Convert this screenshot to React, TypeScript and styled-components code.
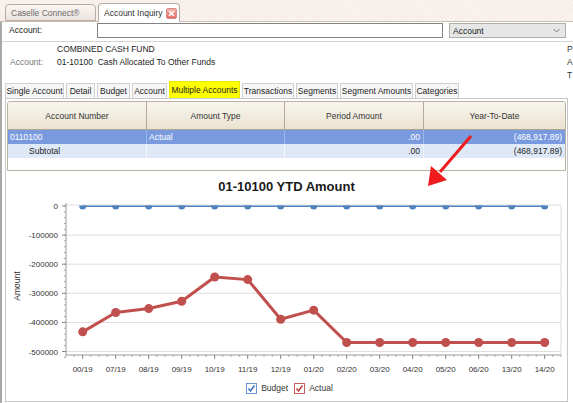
import React from "react";
import styled, { createGlobalStyle } from "styled-components";

const GlobalStyle = createGlobalStyle`
  html, body { margin: 0; padding: 0; background: #fff; }
  body {
    font-family: "Liberation Sans", Arial, sans-serif;
    font-size: 8.5px;
    color: #1e1e1e;
  }
  #root { width: 573px; height: 403px; overflow: hidden; }
`;

const Frame = styled.div`
  position: relative;
  width: 573px;
  height: 403px;
  overflow: hidden;
  display: flex;
  flex-direction: column;
  background: #fff;
`;

const DocStrip = styled.div`
  flex: none;
  height: 22px;
  box-sizing: border-box;
  display: flex;
  align-items: flex-end;
  gap: 2px;
  padding-left: 5px;
  background-color: #f8eee9;
  background-image: repeating-linear-gradient(
    45deg,
    rgba(255, 255, 255, 0.4) 0 1px,
    transparent 1px 3px
  );
  border-bottom: 1px solid #cbbcb4;
`;

const DocTab = styled.div<{ $active?: boolean; $w: number }>`
  width: ${(p) => p.$w}px;
  height: ${(p) => (p.$active ? 19 : 17)}px;
  margin-bottom: ${(p) => (p.$active ? -1 : 0)}px;
  box-sizing: border-box;
  border: 1px solid #b8aba4;
  border-bottom: ${(p) => (p.$active ? "none" : "1px solid #b8aba4")};
  border-radius: 4px 4px 0 0;
  background: ${(p) => (p.$active ? "#fff" : "linear-gradient(#fbf6f3, #ece3de)")};
  color: ${(p) => (p.$active ? "#333" : "#6b6b6b")};
  display: flex;
  align-items: center;
  justify-content: space-between;
  padding: 0 2px 0 5px;
  font-size: 8.5px;
  white-space: nowrap;
`;

const CloseBox = styled.span`
  width: 11px;
  height: 11px;
  box-sizing: border-box;
  border: 1px solid #d58c86;
  border-radius: 2px;
  background: linear-gradient(#f6b0a9, #e2675e);
  display: flex;
  align-items: center;
  justify-content: center;
`;

const Body = styled.div`
  flex: 1;
  display: flex;
  flex-direction: column;
  border-left: 2px solid #a8a8a8;
  min-height: 0;
`;

const AccountRow = styled.div`
  flex: none;
  height: 20px;
  box-sizing: border-box;
  display: flex;
  align-items: flex-start;
  padding: 1px 0 0 7px;
  border-bottom: 1px solid #d4d4d4;
`;

const FieldLabel = styled.span`
  width: 88px;
  line-height: 15px;
  color: #1e1e1e;
`;

const TextInput = styled.div`
  width: 346px;
  height: 15px;
  box-sizing: border-box;
  border: 1px solid #828282;
  background: #fff;
`;

const SelectBox = styled.div`
  width: 117px;
  height: 15px;
  margin-left: 6px;
  box-sizing: border-box;
  border: 1px solid #adadad;
  background: #e6e6e6;
  display: flex;
  align-items: center;
  justify-content: space-between;
  padding: 0 5px 0 3px;
  color: #222;
`;

const InfoArea = styled.div`
  flex: none;
  height: 41px;
  display: grid;
  grid-template-columns: 47px 1fr 6px;
  grid-auto-rows: 13px;
  padding-left: 8px;
  align-items: center;
  overflow: hidden;
`;

const InfoLabel = styled.span`
  color: #7a7a7a;
`;

const InfoValue = styled.span`
  white-space: pre;
  color: #1e1e1e;
`;

const EdgeLetter = styled.span`
  color: #333;
  overflow: hidden;
`;

const TabsRow = styled.div`
  flex: none;
  height: 15px;
  display: flex;
  align-items: flex-end;
  gap: 2px;
  padding-left: 3px;
`;

const PageTab = styled.div<{ $active?: boolean; $w: number }>`
  width: ${(p) => p.$w}px;
  height: ${(p) => (p.$active ? 17 : 15)}px;
  box-sizing: border-box;
  border: 1px solid ${(p) => (p.$active ? "#e8e800" : "#d0d0d0")};
  border-bottom: none;
  background: ${(p) => (p.$active ? "#ffff00" : "#f6f6f6")};
  color: #1e1e1e;
  display: flex;
  align-items: center;
  justify-content: center;
  white-space: nowrap;
  position: relative;
  z-index: 1;
`;

const Panel = styled.div`
  flex: 1;
  margin: 0 5px 1px 3px;
  border: 1px solid #c8c8c8;
  display: flex;
  flex-direction: column;
  min-height: 0;
`;

const DataGrid = styled.div`
  flex: none;
  height: 70px;
  margin: 2px 1px 0 1px;
  box-sizing: border-box;
  border: 1px solid #b9b1a1;
  border-radius: 3px 3px 0 0;
  display: flex;
  flex-direction: column;
  overflow: hidden;
`;

const Cols = "139px 138px 139px 1fr";

const HeaderRow = styled.div`
  height: 28px;
  box-sizing: border-box;
  display: grid;
  grid-template-columns: ${Cols};
  background: linear-gradient(#f8f5ee, #ebe3d1);
  border-bottom: 1px solid #b0a793;
`;

const HeaderCell = styled.div`
  display: flex;
  align-items: center;
  justify-content: center;
  border-right: 1px solid #b3aa97;
  color: #333;
  &:last-child { border-right: none; }
`;

const DataRow = styled.div<{ $selected?: boolean }>`
  height: 14px;
  display: grid;
  grid-template-columns: ${Cols};
  background: ${(p) => (p.$selected ? "#7a9adf" : "#dee8f7")};
  color: ${(p) => (p.$selected ? "#fff" : "#1e1e1e")};
`;

const DataCell = styled.div<{ $align?: "left" | "right"; $indent?: number; $line: string }>`
  display: flex;
  align-items: center;
  justify-content: ${(p) => (p.$align === "right" ? "flex-end" : "flex-start")};
  padding: 0 3px 0 ${(p) => 2 + (p.$indent || 0)}px;
  border-right: 1px solid ${(p) => p.$line};
  white-space: nowrap;
  &:last-child { border-right: none; }
`;

const ChartSection = styled.div`
  flex: 1;
  display: flex;
  flex-direction: column;
  align-items: center;
`;

const ChartTitle = styled.div`
  margin-top: 8px;
  height: 16px;
  line-height: 16px;
  font-size: 13px;
  font-weight: bold;
  color: #1a1a1a;
`;

const ChartSvg = styled.svg`
  display: block;
  width: 560px;
  height: 183px;
`;

const Legend = styled.div`
  height: 18px;
  margin-top: 1px;
  display: flex;
  align-items: center;
  gap: 6px;
  margin-left: 6px;
`;

const LegendItem = styled.div`
  display: flex;
  align-items: center;
  gap: 4px;
  color: #333;
  font-size: 8.5px;
`;

const CheckBox = styled.span<{ $color: string }>`
  width: 11px;
  height: 11px;
  box-sizing: border-box;
  border: 1px solid ${(p) => p.$color};
  background: #fff;
  display: flex;
  align-items: center;
  justify-content: center;
`;

const ArrowOverlay = styled.svg`
  position: absolute;
  left: 0;
  top: 0;
  width: 573px;
  height: 403px;
  pointer-events: none;
  z-index: 5;
`;

const pageTabs = [
  { label: "Single Account", w: 59 },
  { label: "Detail", w: 29 },
  { label: "Budget", w: 33 },
  { label: "Account", w: 35 },
  { label: "Multiple Accounts", w: 71, active: true },
  { label: "Transactions", w: 52 },
  { label: "Segments", w: 42 },
  { label: "Segment Amounts", w: 73 },
  { label: "Categories", w: 44 },
];

const periods = [
  "00/19", "07/19", "08/19", "09/19", "10/19", "11/19", "12/19", "01/20",
  "02/20", "03/20", "04/20", "05/20", "06/20", "13/20", "14/20",
];

const actual = [
  -432500, -366000, -352500, -327500, -244000, -253000, -389000, -358000,
  -468918, -468918, -468918, -468918, -468918, -468918, -468918,
];

// chart geometry (local svg coords)
const AX = 59; // y axis x
const PR = 554; // plot right
const PT = 10; // plot top
const Y0 = 11; // value 0
const SCALE = 29.1 / 100000;
const XB = 160; // x axis line
const X0 = 75.7;
const STEP = 33;

const xAt = (i: number) => X0 + STEP * i;
const yAt = (v: number) => Y0 - v * SCALE;

function Chart() {
  const yTicks = [0, -100000, -200000, -300000, -400000, -500000];
  const minorY: number[] = [];
  for (let v = 0; v >= -520000; v -= 20000) minorY.push(v);
  const minorX: number[] = [];
  for (let x = AX; x <= PR; x += STEP / 4) minorX.push(x);
  const redPts = actual.map((v, i) => `${xAt(i)},${yAt(v)}`).join(" ");
  return (
    <ChartSvg viewBox="0 0 560 183">
      <defs>
        <clipPath id="plotClip">
          <rect x={AX} y={PT + 0.5} width={PR - AX} height={XB - PT} />
        </clipPath>
      </defs>
      {yTicks.slice(1).map((v) => (
        <line key={v} x1={AX} x2={PR} y1={yAt(v)} y2={yAt(v)} stroke="#dedede" strokeWidth={1} />
      ))}
      <line x1={AX} x2={PR} y1={PT} y2={PT} stroke="#e0e0e0" />
      <line x1={PR} x2={PR} y1={PT} y2={XB} stroke="#dcdcdc" />
      <line x1={AX} x2={AX} y1={PT - 2} y2={XB} stroke="#9a9a9a" />
      <line x1={AX} x2={PR} y1={XB} y2={XB} stroke="#9a9a9a" />
      {minorY.map((v) => (
        <line key={v} x1={AX - 2} x2={AX} y1={yAt(v)} y2={yAt(v)} stroke="#a8a8a8" />
      ))}
      {yTicks.map((v) => (
        <g key={v}>
          <line x1={AX - 4} x2={AX} y1={yAt(v)} y2={yAt(v)} stroke="#8a8a8a" />
          <text
            x={AX - 8}
            y={yAt(v) + 3}
            textAnchor="end"
            fontSize="8"
            fill="#333"
            fontFamily="Liberation Sans, Arial, sans-serif"
          >
            {v === 0 ? "0" : String(v)}
          </text>
        </g>
      ))}
      {minorX.map((x, i) => (
        <line key={i} x1={x} x2={x} y1={XB} y2={XB + 2} stroke="#a8a8a8" />
      ))}
      {periods.map((p, i) => (
        <g key={p}>
          <line x1={xAt(i)} x2={xAt(i)} y1={XB} y2={XB + 4} stroke="#8a8a8a" />
          <text
            x={xAt(i)}
            y={177}
            textAnchor="middle"
            fontSize="8"
            fill="#333"
            fontFamily="Liberation Sans, Arial, sans-serif"
          >
            {p}
          </text>
        </g>
      ))}
      <text
        transform="translate(13,91) rotate(-90)"
        textAnchor="middle"
        fontSize="8.5"
        fill="#333"
        fontFamily="Liberation Sans, Arial, sans-serif"
      >
        Amount
      </text>
      <polyline points={redPts} fill="none" stroke="#c0504d" strokeWidth={3} strokeLinejoin="round" />
      {actual.map((v, i) => (
        <circle key={i} cx={xAt(i)} cy={yAt(v)} r={4.5} fill="#c0504d" />
      ))}
      <g clipPath="url(#plotClip)">
        <line x1={xAt(0)} x2={xAt(14)} y1={Y0} y2={Y0} stroke="#4f81bd" strokeWidth={2} />
        {periods.map((p, i) => (
          <circle key={p} cx={xAt(i)} cy={Y0} r={3.5} fill="#4f81bd" />
        ))}
      </g>
    </ChartSvg>
  );
}

function Check({ color }: { color: string }) {
  return (
    <svg width="9" height="9" viewBox="0 0 9 9">
      <polyline points="1.5,4.5 3.5,7 7.5,1.5" fill="none" stroke={color} strokeWidth={1.5} />
    </svg>
  );
}

export default function App() {
  return (
    <>
      <GlobalStyle />
      <Frame>
        <DocStrip>
          <DocTab $w={91}>Caselle Connect®</DocTab>
          <DocTab $w={82} $active>
            Account Inquiry
            <CloseBox>
              <svg width="7" height="7" viewBox="0 0 7 7">
                <path d="M1 1 L6 6 M6 1 L1 6" stroke="#fff" strokeWidth={1.6} />
              </svg>
            </CloseBox>
          </DocTab>
        </DocStrip>
        <Body>
          <AccountRow>
            <FieldLabel>Account:</FieldLabel>
            <TextInput />
            <SelectBox>
              Account
              <svg width="7" height="5" viewBox="0 0 7 5">
                <polyline points="0.5,1 3.5,4 6.5,1" fill="none" stroke="#777" strokeWidth={1} />
              </svg>
            </SelectBox>
          </AccountRow>
          <InfoArea>
            <span />
            <InfoValue>COMBINED CASH FUND</InfoValue>
            <EdgeLetter>P</EdgeLetter>
            <InfoLabel>Account:</InfoLabel>
            <InfoValue>01-10100  Cash Allocated To Other Funds</InfoValue>
            <EdgeLetter>A</EdgeLetter>
            <span />
            <span />
            <EdgeLetter>T</EdgeLetter>
          </InfoArea>
          <TabsRow>
            {pageTabs.map((t) => (
              <PageTab key={t.label} $w={t.w} $active={t.active}>
                {t.label}
              </PageTab>
            ))}
          </TabsRow>
          <Panel>
            <DataGrid>
              <HeaderRow>
                <HeaderCell>Account Number</HeaderCell>
                <HeaderCell>Amount Type</HeaderCell>
                <HeaderCell>Period Amount</HeaderCell>
                <HeaderCell>Year-To-Date</HeaderCell>
              </HeaderRow>
              <DataRow $selected>
                <DataCell $line="#9fb6ea">0110100</DataCell>
                <DataCell $line="#9fb6ea">Actual</DataCell>
                <DataCell $line="#9fb6ea" $align="right">.00</DataCell>
                <DataCell $line="#9fb6ea" $align="right">(468,917.89)</DataCell>
              </DataRow>
              <DataRow>
                <DataCell $line="#f4f8fd" $indent={19}>Subtotal</DataCell>
                <DataCell $line="#f4f8fd" />
                <DataCell $line="#f4f8fd" $align="right">.00</DataCell>
                <DataCell $line="#f4f8fd" $align="right">(468,917.89)</DataCell>
              </DataRow>
            </DataGrid>
            <ChartSection>
              <ChartTitle>01-10100 YTD Amount</ChartTitle>
              <Chart />
              <Legend>
                <LegendItem>
                  <CheckBox $color="#6d92cc">
                    <Check color="#3f72c0" />
                  </CheckBox>
                  Budget
                </LegendItem>
                <LegendItem>
                  <CheckBox $color="#c8605c">
                    <Check color="#c0403c" />
                  </CheckBox>
                  Actual
                </LegendItem>
              </Legend>
            </ChartSection>
          </Panel>
        </Body>
        <ArrowOverlay viewBox="0 0 573 403">
          <line x1={471} y1={136} x2={440} y2={172} stroke="#ee1c1c" strokeWidth={3} />
          <polygon points="428,186 431,166 447,180" fill="#ee1c1c" />
        </ArrowOverlay>
      </Frame>
    </>
  );
}
